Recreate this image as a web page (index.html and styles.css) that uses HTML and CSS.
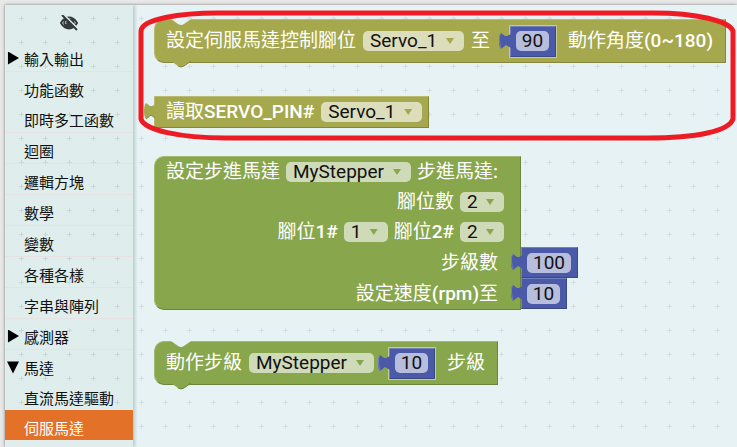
FILE: index.html
```html
<!DOCTYPE html>
<html lang="zh-Hant">
<head>
<meta charset="utf-8">
<title>積木編輯器</title>
<link rel="stylesheet" href="styles.css">
</head>
<body>
<div class="app">
  <svg class="grid" aria-hidden="true">
    <defs>
      <pattern id="cross" width="24" height="24" patternUnits="userSpaceOnUse">
        <path d="M14 13.500h5M16.500 11v5" stroke="currentColor" stroke-width="1"/>
      </pattern>
    </defs>
    <rect width="100%" height="100%" fill="url(#cross)"/>
  </svg>

  <nav class="toolbox" aria-label="積木分類">
    <button class="toggle" type="button" aria-label="隱藏">
      <svg width="18" height="16" viewBox="0 0 18 16">
        <path d="M1 8C4 3 7 2.500 9 2.500s5 .5 8 5.500C14 13 11 13.500 9 13.500S4 13 1 8z" fill="none" stroke="#34393a" stroke-width="2"/>
        <path d="M5 4a5.500 5.500 0 0 0 0 8c2 1.500 6 1.500 8 0a5.500 5.500 0 0 0 0-8z" fill="#34393a"/>
        <path d="M8 5a3 3 0 0 0-2 4" fill="none" stroke="#dfeeee" stroke-width="1"/>
        <path d="M4 0l13 13" stroke="#dfeeee" stroke-width="2"/>
        <path d="M2 0l15 15" stroke="#34393a" stroke-width="2"/>
      </svg>
    </button>
    <button class="category lined" type="button"><span class="marker closed"></span>輸入輸出</button>
    <button class="category" type="button"><span class="marker"></span>功能函數</button>
    <button class="category lined" type="button"><span class="marker"></span>即時多工函數</button>
    <button class="category lined" type="button"><span class="marker"></span>迴圈</button>
    <button class="category lined" type="button"><span class="marker"></span>邏輯方塊</button>
    <button class="category lined" type="button"><span class="marker"></span>數學</button>
    <button class="category lined" type="button"><span class="marker"></span>變數</button>
    <button class="category lined" type="button"><span class="marker"></span>各種各樣</button>
    <button class="category lined" type="button"><span class="marker"></span>字串與陣列</button>
    <button class="category lined" type="button"><span class="marker closed"></span>感測器</button>
    <button class="category" type="button"><span class="marker open"></span>馬達</button>
    <button class="category" type="button"><span class="marker"></span>直流馬達驅動</button>
    <button class="category selected" type="button"><span class="marker"></span>伺服馬達</button>
  </nav>

  <main class="flyout">
    <section class="block olive statement">
      <svg class="notch" width="20" height="7" viewBox="0 0 20 7"><path d="M0 0h20l-7 5q-3 2-6 0z" fill="#e6f2f3"/></svg>
      <svg class="bump" width="20" height="7" viewBox="0 0 20 7"><path d="M0 0h20l-7 5q-3 2-6 0z" fill="#a5a84c"/><path d="M7 5q3 2 6 0l7-5" fill="none" stroke="#84863d"/></svg>
      <span>設定伺服馬達控制腳位</span>
      <span class="pick"><select aria-label="伺服馬達控制腳位"><option>Servo_1</option></select></span>
      <span>至</span>
      <span class="value inset"><svg class="plug" width="12" height="20" viewBox="0 0 12 20"><path d="M12 2L8 4 6 4 2 1Q0 3 0 9t2 8L7 13l5 3z" fill="#4a5aa8"/><path d="M2 1Q0 3 0.500 9t2 8" fill="none" stroke="#7380bd"/></svg><input class="two" aria-label="角度" value="90"></span>
      <span class="after">動作角度<b>(0~180)</b></span>
    </section>

    <section class="block olive output">
      <svg class="plug" width="12" height="20" viewBox="0 0 12 20"><path d="M12 2L8 4 6 4 2 1Q0 3 0 9t2 8L7 13l5 3z" fill="#a5a84c"/><path d="M2 17l5-4 4 3" fill="none" stroke="#84863d"/></svg>
      <span>讀取<b>SERVO_PIN#</b></span>
      <span class="pick"><select aria-label="讀取腳位"><option>Servo_1</option></select></span>
    </section>

    <section class="block green stack">
      <div class="row"><span>設定步進馬達</span><span class="pick"><select aria-label="步進馬達名稱"><option>MyStepper</option></select></span><span class="last">步進馬達<b>:</b></span></div>
      <div class="row"><span>腳位數</span><span class="pick"><select aria-label="腳位數"><option>2</option></select></span></div>
      <div class="row"><span>腳位<b>1#</b></span><span class="pick"><select aria-label="腳位1"><option>1</option></select></span><span>腳位<b>2#</b></span><span class="pick"><select aria-label="腳位2"><option>2</option></select></span></div>
      <div class="row"><span class="last">步級數</span><span class="value outer"><svg class="plug" width="12" height="20" viewBox="0 0 12 20"><path d="M12 2L8 4 6 4 2 1Q0 3 0 9t2 8L7 13l5 3z" fill="#4a5aa8"/><path d="M2 1Q0 3 0.500 9t2 8" fill="none" stroke="#7380bd"/></svg><input class="three" aria-label="步級數" value="100"></span></div>
      <div class="row"><span class="last">設定速度<b>(rpm)</b>至</span><span class="value outer"><svg class="plug" width="12" height="20" viewBox="0 0 12 20"><path d="M12 2L8 4 6 4 2 1Q0 3 0 9t2 8L7 13l5 3z" fill="#4a5aa8"/><path d="M2 1Q0 3 0.500 9t2 8" fill="none" stroke="#7380bd"/></svg><input class="two" aria-label="速度" value="10"></span></div>
    </section>

    <section class="block green statement">
      <svg class="notch" width="20" height="7" viewBox="0 0 20 7"><path d="M0 0h20l-7 5q-3 2-6 0z" fill="#e6f2f3"/></svg>
      <svg class="bump" width="20" height="7" viewBox="0 0 20 7"><path d="M0 0h20l-7 5q-3 2-6 0z" fill="#88a64c"/><path d="M7 5q3 2 6 0l7-5" fill="none" stroke="#6c853c"/></svg>
      <span>動作步級</span>
      <span class="pick"><select aria-label="馬達名稱"><option>MyStepper</option></select></span>
      <span class="value inset near"><svg class="plug" width="12" height="20" viewBox="0 0 12 20"><path d="M12 2L8 4 6 4 2 1Q0 3 0 9t2 8L7 13l5 3z" fill="#4a5aa8"/><path d="M2 1Q0 3 0.500 9t2 8" fill="none" stroke="#7380bd"/></svg><input class="two" aria-label="步級" value="10"></span>
      <span class="after">步級</span>
    </section>

    <svg class="outline" viewBox="0 0 600 132" preserveAspectRatio="none" aria-hidden="true">
      <path d="M3 21C4 9 42 3 80 3H516C560 3 592 11 596 21V109C592 121 560 128 510 128H88C42 128 6 120 3 109Z" fill="none" stroke="#ed1c24" stroke-width="5"/>
    </svg>
  </main>
</div>
</body>
</html>
```
FILE: styles.css
```css
* {
  box-sizing: border-box;
}

body {
  margin: 0;
  padding: 5px 0 0 5px;
  min-height: 100vh;
  display: flex;
  background: #e8e8e8;
  font-family: Roboto, "Noto Sans CJK TC", sans-serif;
  overflow: hidden;
}

.app {
  position: relative;
  flex: 1;
  display: flex;
  background: #e6f2f3;
  box-shadow: 0 0 3px #777;
}

.grid {
  position: absolute;
  inset: 0;
  width: 100%;
  height: 100%;
  color: #b4c6c6;
}

button {
  border: 0;
  padding: 0;
  background: none;
  font: inherit;
  color: inherit;
}

b {
  font-weight: 500;
}

.toolbox {
  position: relative;
  z-index: 1;
  flex: none;
  width: 128px;
  display: flex;
  flex-direction: column;
  background: rgba(215, 234, 232, 0.5);
  box-shadow: 2px 0 3px #b9cbcc;
  font-size: 15px;
  color: #111;
}

.toggle {
  height: 36px;
  display: flex;
  align-items: center;
  justify-content: center;
}

.category {
  display: flex;
  align-items: center;
  gap: 5px;
  padding: 4px 0 0 2px;
  height: 30px;
  white-space: nowrap;
}

.lined {
  height: 31px;
  border-bottom: 1px solid #e7e1e1;
}

.selected {
  background: #e37128;
  color: #fff;
}

.marker {
  width: 12px;
  height: 13px;
}

.closed,
.open {
  background: #000;
}

.closed {
  clip-path: polygon(8% 0, 100% 50%, 8% 100%);
}

.open {
  clip-path: polygon(0 8%, 100% 8%, 50% 100%);
}

.flyout {
  position: relative;
  flex: 1;
  min-width: 0;
  display: flex;
  flex-direction: column;
  align-items: flex-start;
  padding: 14px 0 0 21px;
  background: rgba(230, 242, 243, 0.6);
}

.block {
  position: relative;
  display: flex;
  align-items: center;
  gap: 7px;
  padding: 0 12px 0 11px;
  border: 1px solid;
  font-size: 19px;
  font-weight: 400;
  line-height: 20px;
  color: #fff;
  white-space: nowrap;
}

.olive {
  background: #a5a84c;
  border-color: #b9bb72 #84863d #84863d #b9bb72;
  --arrow: #a5a84c;
  --field: #dcddba;
}

.green {
  background: #88a64c;
  border-color: #a1b971 #6c853c #6c853c #a1b971;
  --arrow: #88a64c;
  --field: #cfdbb8;
}

.statement {
  height: 44px;
  border-radius: 10px 0 0 10px;
}

.output {
  height: 32px;
  margin: 33px 0 28px;
  padding-right: 6px;
}

.stack {
  flex-direction: column;
  align-items: stretch;
  gap: 0;
  margin-bottom: 31px;
  padding: 0 16px 0 11px;
  border-radius: 10px 0 0 10px;
}

.row {
  position: relative;
  display: flex;
  align-items: center;
  justify-content: flex-end;
  gap: 6px;
  height: 30px;
}

.row:nth-last-child(-n+2) {
  height: 31px;
}

.last {
  margin-right: 6px;
}

.notch,
.bump {
  position: absolute;
  left: 16px;
}

.notch {
  top: -1px;
}

.bump {
  top: 41px;
}

.plug {
  position: absolute;
  left: -11px;
  top: 5px;
}

.pick {
  position: relative;
  display: flex;
}

.pick::after {
  content: "";
  position: absolute;
  right: 10px;
  top: 7px;
  width: 8px;
  height: 6px;
  background: var(--arrow);
  clip-path: polygon(0 0, 100% 0, 50% 100%);
  pointer-events: none;
}

select,
input {
  height: 20px;
  border: 0;
  border-radius: 5px;
  font: 400 19px/20px Roboto, sans-serif;
  color: #111;
}

select {
  appearance: none;
  padding: 0 26px 0 7px;
  background: var(--field);
}

.value {
  position: relative;
  display: flex;
  align-items: center;
  height: 31px;
  padding: 0 6px 0 5px;
  background: #4a5aa8;
  border: 1px solid;
  border-color: #7380bd #3b4886 #3b4886 #7380bd;
}

.value input {
  padding: 0;
  text-align: center;
  background: #b7bddc;
}

.two {
  width: 33px;
}

.three {
  width: 44px;
}

.inset {
  margin-left: 13px;
  outline: 1px solid #c7cb91;
}

.inset .plug {
  left: -12px;
}

.near {
  margin-left: 8px;
}

.after {
  margin-left: 5px;
}

.outer {
  position: absolute;
  left: calc(100% + 17px);
  top: 0;
}

.outline {
  position: absolute;
  left: 5px;
  top: 5px;
  width: calc(100% - 5px);
  height: 132px;
  pointer-events: none;
}
```
